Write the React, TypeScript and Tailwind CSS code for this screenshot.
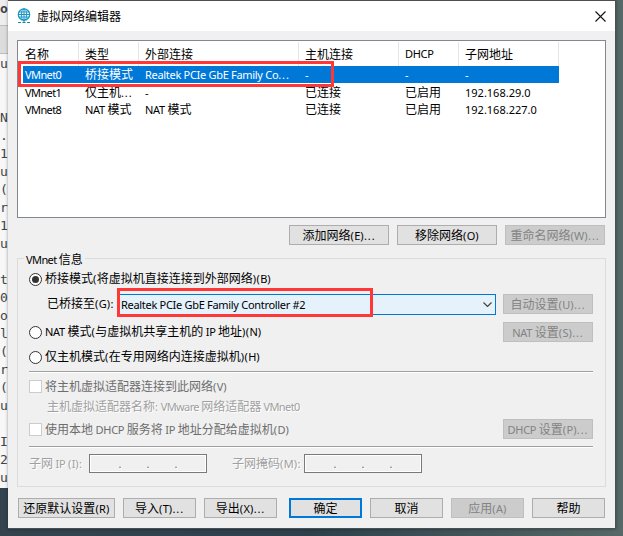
import type { ReactNode } from "react";
import clsx from "clsx";

const columns = [
  { title: "名称", width: "w-[60px]" },
  { title: "类型", width: "w-[60px]" },
  { title: "外部连接", width: "w-[160px]" },
  { title: "主机连接", width: "w-[100px]" },
  { title: "DHCP", width: "w-[60px]" },
  { title: "子网地址", width: "w-[100px]" },
];

const networks = [
  ["VMnet0", "桥接模式", "Realtek PCIe GbE Family Co...", "-", "-", "-"],
  ["VMnet1", "仅主机...", "-", "已连接", "已启用", "192.168.29.0"],
  ["VMnet8", "NAT 模式", "NAT 模式", "已连接", "已启用", "192.168.227.0"],
];

const terminal = ["u", "", "", "N", ".", "1", "u", "(", "r", "1", "u", "", "t", "0", "o", "l", "(", "r", "(", "u", "", "I", "2", "u"];

// Letter spacing per kind of run: dots and brackets are wide, words are tight
const runStyle = (run: string) => {
  if (/[\u4e00-\u9fff]/.test(run)) return "text-[12px] font-['Noto_Sans_CJK_SC',sans-serif]";
  if (run === "...") return "tracking-[0.9px]";
  if (/^[():]+$/.test(run)) return "tracking-[0.4px]";
  if (/VM/.test(run)) return "tracking-[-0.6px]";
  if (/[A-Z]{2}|[a-z]/.test(run)) return "tracking-[-0.3px]";
  return "";
};

function Txt({ children, className }: { children: string; className?: string }) {
  const runs = children.match(/[\u4e00-\u9fff]+|\.{3}|[():]+|(?:(?!\.{3})[^\u4e00-\u9fff():])+/g) ?? [];
  return (
    <span className={clsx("whitespace-pre", className)}>
      {runs.map((run, i) => (
        <span key={i} className={runStyle(run)}>
          {run}
        </span>
      ))}
    </span>
  );
}

function Button({
  children,
  className,
  disabled,
  primary,
}: {
  children: string;
  className?: string;
  disabled?: boolean;
  primary?: boolean;
}) {
  return (
    <button
      disabled={disabled}
      className={clsx(
        "flex h-5 shrink-0 items-center justify-center leading-4",
        primary ? "border-2 border-[#0078d7]" : "border",
        disabled ? "border-[#bfbfbf] bg-[#cccccc] text-[#838383]" : "bg-[#e1e1e1]",
        !disabled && !primary && "border-[#adadad]",
        className
      )}
    >
      <Txt>{children}</Txt>
    </button>
  );
}

function Radio({ children, checked }: { children: string; checked?: boolean }) {
  return (
    <label className="flex h-5 items-center gap-[3px]">
      <span className="flex size-[13px] items-center justify-center rounded-full border border-[#333] bg-white">
        {checked && <span className="size-[7px] rounded-full bg-[#333]" />}
      </span>
      <Txt className="-mt-px">{children}</Txt>
    </label>
  );
}

function Check({ children }: { children: string }) {
  return (
    <label className="flex h-5 items-center gap-[3px] text-[#6d6d6d]">
      <span className="size-[13px] border border-[#cccccc] bg-white" />
      <Txt>{children}</Txt>
    </label>
  );
}

function IpInput() {
  return (
    <div className="flex h-[19px] w-[118px] items-center justify-center gap-[25px] border border-[#7a7a7a] text-[#6d6d6d] shadow-[inset_0_0_0_1px_white]">
      <span>.</span>
      <span>.</span>
      <span>.</span>
    </div>
  );
}

function Divider() {
  return <div className="h-0.5 w-[564px] border-t border-[#a0a0a0] bg-white" />;
}

function Disabled({ children, className }: { children: ReactNode; className?: string }) {
  return <div className={clsx("text-[#a0a0a0] [text-shadow:1px_1px_0_white]", className)}>{children}</div>;
}

export default function App() {
  return (
    <div className="flex h-[536px] w-[623px] overflow-hidden bg-linear-to-r from-[#33444f] via-[#2c414c] to-[#566967] font-['Noto_Sans','Noto_Sans_CJK_SC',sans-serif] text-[11px] leading-4 text-black">
      {/* Terminal window behind the dialog */}
      <div className="h-[488px] w-2 shrink-0 bg-[#f7f7f7] font-['DejaVu_Sans_Mono',monospace] text-[13px] leading-[18px] text-[#3f4448]">
        <div className="h-[25px] bg-[#eeeeee] font-bold">o</div>
        <div className="mb-px h-[29px] border-y border-[#bdbdbd] bg-[#dcdcdc]" />
        {terminal.map((line, i) => (
          <div key={i} className="h-[18px]">
            {line}
          </div>
        ))}
      </div>

      {/* Dialog */}
      <div className="h-[529px] w-[608px] shrink-0 border-t border-r border-b border-[#4b4f52] bg-[#f0f0f0] shadow-[0_0_3px_rgba(0,0,0,0.4)]">
        <div className="flex h-[30px] items-center bg-white pr-[9px] pl-[9px]">
          <svg viewBox="0 0 14 16" className="h-4 w-[14px]" fill="none" stroke="#1795c4" strokeWidth="1">
            <circle cx="7" cy="6.5" r="5.7" strokeWidth="1.2" />
            <ellipse cx="7" cy="6.5" rx="2.7" ry="5.7" />
            <path d="M7 .8v13.7M1.8 4h10.4M1.3 6.5h11.4M1.8 9h10.4" />
            <path d="M1 14.5h3M5.5 14.5h3M10 14.5h3" stroke="#0f8f8f" />
          </svg>
          <span className="ml-[6px] flex-1 font-['Noto_Sans_CJK_SC',sans-serif] text-[12px]">虚拟网络编辑器</span>
          <svg viewBox="0 0 11 11" className="size-[11px]" fill="none" stroke="#111" strokeWidth="1.1">
            <path d="M.5.5l10 10M10.5.5l-10 10" />
          </svg>
        </div>

        <div className="px-[9px] pt-[9px]">
          {/* Network table */}
          <div className="relative h-[178px] w-[589px] border border-[#828790] bg-white">
            <div className="flex h-[25px] pt-px pl-px">
              {columns.map((c) => (
                <div key={c.title} className={clsx("flex items-center border-r border-[#e5e5e5] pl-[6px]", c.width)}>
                  <Txt>{c.title}</Txt>
                </div>
              ))}
            </div>
            {networks.map((row, i) => (
              <div
                key={row[0]}
                className={clsx(
                  "ml-[5px] flex h-[17px] w-[536px] items-center",
                  i === 0 ? "bg-[#0078d7] text-white" : "pt-0.5"
                )}
              >
                {row.map((cell, j) => (
                  <div key={j} className={clsx("shrink-0 pl-0.5", columns[j].width)}>
                    <Txt>{cell}</Txt>
                  </div>
                ))}
              </div>
            ))}
            <div className="absolute top-5 left-0 h-[26px] w-[316px] border-[3px] border-[#ff3737]" />
          </div>

          <div className="mt-[7px] flex w-[588px] justify-end gap-2">
            <Button className="w-[100px]">添加网络(E)...</Button>
            <Button className="w-[100px]">移除网络(O)</Button>
            <Button className="w-[100px]" disabled>
              重命名网络(W)...
            </Button>
          </div>

          {/* VMnet settings */}
          <div className="relative mt-[13px] h-[229px] w-[589px] border border-[#dcdcdc] pt-[10px] pl-[11px]">
            <div className="absolute -top-2 left-[6px] bg-[#f0f0f0] px-0.5">
              <Txt>VMnet 信息</Txt>
            </div>
            <Radio checked>桥接模式(将虚拟机直接连接到外部网络)(B)</Radio>
            <div className="relative mt-[5px] flex h-[21px]">
              <div className="w-[89px] pt-px pl-[18px]">
                <Txt>已桥接至(G):</Txt>
              </div>
              <div className="mr-[7px] flex h-[21px] w-[378px] items-center justify-between border border-[#0078d7] bg-[#e5f1fb] pr-[3px] pl-0.5">
                <Txt>Realtek PCIe GbE Family Controller #2</Txt>
                <svg viewBox="0 0 9 5" className="h-[5px] w-[9px]" fill="none" stroke="#444" strokeWidth="1.2">
                  <path d="M.5.5l4 4 4-4" />
                </svg>
              </div>
              <Button className="w-[90px]" disabled>
                自动设置(U)...
              </Button>
              <div className="absolute -top-[6px] left-[88px] h-[29px] w-[256px] border-[3px] border-[#ff3737]" />
            </div>
            <div className="mt-[7px] flex w-[564px] justify-between">
              <Radio>NAT 模式(与虚拟机共享主机的 IP 地址)(N)</Radio>
              <Button className="w-[90px]" disabled>
                NAT 设置(S)...
              </Button>
            </div>
            <div className="mt-[5px] mb-1">
              <Radio>仅主机模式(在专用网络内连接虚拟机)(H)</Radio>
            </div>
            <Divider />
            <div className="mt-[3px]">
              <Check>将主机虚拟适配器连接到此网络(V)</Check>
            </div>
            <Disabled className="mt-0.5 pl-[18px]">
              <Txt>主机虚拟适配器名称: VMware 网络适配器 VMnet0</Txt>
            </Disabled>
            <div className="mt-1 mb-[7px] flex w-[564px] justify-between">
              <Check>使用本地 DHCP 服务将 IP 地址分配给虚拟机(D)</Check>
              <Button className="w-[90px]" disabled>
                DHCP 设置(P)...
              </Button>
            </div>
            <Divider />
            <Disabled className="mt-[6px] flex items-center">
              <Txt className="w-[60px]">子网 IP (I):</Txt>
              <IpInput />
              <Txt className="ml-[25px] w-[72px]">子网掩码(M):</Txt>
              <IpInput />
            </Disabled>
          </div>

          {/* Footer */}
          <div className="mt-[11px] ml-px flex gap-2">
            <Button className="w-[97px]">还原默认设置(R)</Button>
            <Button className="w-[73px]">导入(T)...</Button>
            <Button className="mr-1 w-[73px]">导出(X)...</Button>
            <Button className="w-[73px]" primary>
              确定
            </Button>
            <Button className="w-[73px]">取消</Button>
            <Button className="w-[73px]" disabled>
              应用(A)
            </Button>
            <Button className="w-[73px]">帮助</Button>
          </div>
        </div>
      </div>
    </div>
  );
}
